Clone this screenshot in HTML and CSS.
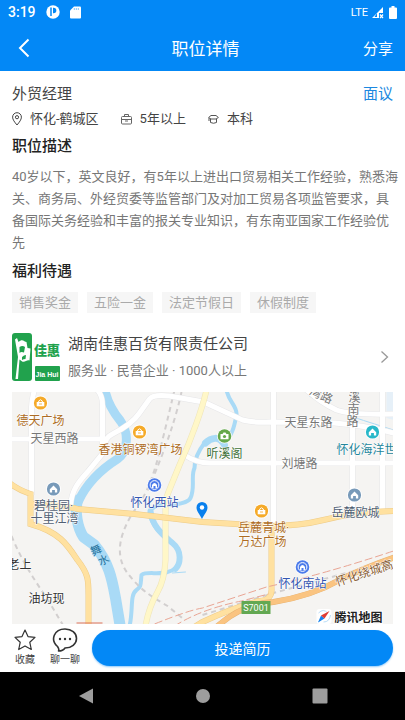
FILE: index.html
```html
<!DOCTYPE html>
<html lang="zh-CN">
<head>
<meta charset="utf-8">
<meta name="viewport" content="width=device-width, initial-scale=1">
<title>职位详情</title>
<link rel="stylesheet" href="styles.css">
</head>
<body>
<div class="status">
  <span class="time">3:19</span>
  <svg width="14" height="14" viewBox="0 0 14 14"><circle cx="7" cy="7" r="6.7" fill="#fff"/><path d="M5 2.500v8.500" fill="none" stroke="#0388f6" stroke-width="1.500"/><path d="M7 2.800h.6a2.600 2.600 0 0 1 0 5.400H7z" fill="#0388f6"/></svg>
  <svg width="11" height="13" viewBox="0 0 11 13"><path d="M4 .5h6q1 0 1 1v10q0 1-1 1H1q-1 0-1-1v-7z" fill="#fff"/><path d="M4.3 2v2M6.3 2v2M8.3 2v2" stroke="#0388f6" stroke-width=".5"/></svg>
  <span class="lte">LTE</span>
  <svg width="13" height="13" viewBox="0 0 13 13"><path d="M12 1v6H8v5H1z" fill="#fff"/><path d="M6 7v4H3.5z" fill="#0388f6"/><path d="M9 8.5l3 3.5M12 8.5L9 12" stroke="#fff" stroke-width="1.2"/></svg>
  <svg class="battery" width="8" height="13" viewBox="0 0 8 13"><path d="M2.5 0h3v1.5H7q1 0 1 1V12q0 1-1 1H1q-1 0-1-1V2.500q0-1 1-1h1.500z" fill="#fff"/></svg>
</div>
<header class="header">
  <button class="back" aria-label="返回"><svg width="12" height="20" viewBox="0 0 12 20"><path d="M10.500 1.500L2 10l8.500 8.500" fill="none" stroke="#fff" stroke-width="2"/></svg></button>
  <h1>职位详情</h1>
  <button class="share">分享</button>
</header>
<main class="content">
  <div class="job"><span>外贸经理</span><span class="salary">面议</span></div>
  <div class="facts">
    <span class="fact"><svg width="10" height="14" viewBox="0 0 10 14" fill="none" stroke="#444"><path d="M5 13C2.500 10 .6 7.600.6 5.100a4.400 4.400 0 0 1 8.800 0C9.400 7.600 7.500 10 5 13z"/><circle cx="5" cy="5.200" r="1.600"/></svg>怀化-鹤城区</span>
    <span class="fact"><svg width="11" height="11" viewBox="0 0 11 11" fill="none" stroke="#666"><rect x=".5" y="2.500" width="10" height="7.500" rx="1"/><path d="M3.500 2.500v-2h4v2M.5 5.500h10M4 7h3"/></svg>5年以上</span>
    <span class="fact"><svg width="11" height="11" viewBox="0 0 11 11" fill="none" stroke="#555"><path d="M.6 3.500L3 1.500h5l2.400 2L8 5H3zM2.500 5v3.500q3 1.500 6 0V5M1 4v3"/></svg>本科</span>
  </div>
  <h2>职位描述</h2>
  <p class="desc">40岁以下，英文良好，有5年以上进出口贸易相关工作经验，熟悉海关、商务局、外经贸委等监管部门及对加工贸易各项监管要求，具备国际关务经验和丰富的报关专业知识，有东南亚国家工作经验优先</p>
  <h2>福利待遇</h2>
  <ul class="tags"><li>销售奖金</li><li>五险一金</li><li>法定节假日</li><li>休假制度</li></ul>
  <a class="company" href="#company">
    <svg class="logo" width="48" height="48" viewBox="0 0 48 48">
      <rect width="20" height="48" rx="3" fill="#21a24d"/>
      <path d="M3 6.500L5 5l1.500 4c4-4 6 0 8 0l1 6 3 .5-1 12c-3-1-5 3-8 .5l-2-1.500L6 46H3.500L6 24z" fill="#fff"/>
      <path d="M7.500 14q3-2 5.500 0l-1 5.500q-3-1-4.500.5zM10 24q2-2 4-2l-.500 4q-2 0-3.500 1z" fill="#21a24d"/>
      <text x="35" y="22" class="logo-name">佳惠</text>
      <rect x="23" y="33" width="25" height="15" rx="1" fill="#21a24d"/>
      <text x="35" y="44" class="logo-text">Jia Hui</text>
    </svg>
    <span class="info"><span class="name">湖南佳惠百货有限责任公司</span><span class="meta">服务业 · 民营企业 · 1000人以上</span></span>
    <svg width="9" height="14" viewBox="0 0 9 14"><path d="M1.500 1.500L7.500 7l-6 5.500" fill="none" stroke="#999" stroke-width="1.300"/></svg>
  </a>
  <svg class="map" viewBox="12 392 382 232" preserveAspectRatio="xMidYMid slice" role="img" aria-label="地图">
    <defs>
      <g id="home"><circle r="7.500" fill="#fff"/><circle r="6.600"/><path d="M-3.700.3L0-3.500 3.700.3V3.400H1.400V1h-2.800v2.400h-2.300z" fill="#fff"/></g>
      <g id="bag"><circle r="7.500" fill="#fff"/><circle r="6.600"/><path d="M-3.800-1h7.600v4.300h-7.600z" fill="#fff"/><path d="M-1.800-1v-1q1.800-2.500 3.600 0v1" fill="none" stroke="#fff"/><path d="M-1.500 1h3" stroke="#f5a623" stroke-width=".8"/></g>
      <g id="train"><circle r="7.500" fill="#fff"/><circle r="6.800"/><circle r="4.400" fill="none" stroke="#fff"/><path d="M-2.500 3v-3q2.500-4 5 0v3h-1.500V1h-2v2z" fill="#fff"/></g>
    </defs>
    <rect x="12" y="392" width="382" height="232" fill="#f5f4f2"/>
    <path d="M387 392v26l7 2v-28z" fill="#e6f0f8"/>
    <g class="water">
      <path d="M105 388C108 405 116 415 121 421 131 435 127 453 118 459 99 471 87 484 79 501" stroke-width="9"/>
      <path d="M78 500C75 512 78 528 84 537L95 545C110 563 113 582 116 598L121 628" stroke-width="11"/>
      <path d="M227 390C229 402 238 406 237 415 235 425 233 436 224 444" stroke-width="4"/>
      <path d="M225 445C220 435 211 438 206 443" stroke-width="7"/>
      <path d="M205 443C198 452 195 461 195 468 191 476 196 488 191 498 188 504 174 505 162 505 155 506 151 509 150 513 153 530 165 535 173 543 186 553 180 570 168 572 159 575 147 571 142 575 141 584 142 587 137 590 130 595 134 610 130 626" stroke-width="4"/>
      <path d="M151 511C153 528 165 536 173 543 183 551 181 564 176 569" stroke-width="6"/>
      <path d="M310 396C339 414 357 418 394 430M173 573l13-1" stroke-width="1"/>
    </g>
    <g class="rail">
      <path d="M175 390Q168 420 160 452T142 500L132 515C116 542 117 562 132 578 143 592 158 600 168 606L184 619"/>
      <path d="M182 392Q176 420 163 454L148 492"/>
      <path d="M12 536C22 560 34 579 48 599L64 626"/>
      <path d="M203 615L274 593 394 560"/>
    </g>
    <g class="edge"><path id="white" d="M35 390Q32 400 32 407V495M12 439H103M98 390Q103 396 103 405V447M71 506C72 490 79 482 88 472L106 450Q103 439 113 434C125 428 134 422 140 413L150 399Q154 394 170 396L204 402Q230 414 243 420 255 423 270 422L335 423Q370 426 394 433M305 388Q320 402 337 410 351 415 394 414M274 390V525M185 455Q197 463 210 463H394M353 425V512M383 390V512"/></g>
    <use href="#white" class="white"/>
    <path d="M207 390C203 408 192 439 180 465L169 492Q166 499 166 512V560Q165 580 158 592 149 608 146 626" class="pale-edge"/>
    <path d="M207 390C203 408 192 439 180 465L169 492Q166 499 166 512V560Q165 580 158 592 149 608 146 626" class="pale"/>
    <g class="road-edge"><path id="yellow" d="M10 483Q19 490 31 494V524C60 532 68 545 78 560 89 574 89 580 89 595V626M31 504Q68 506 78 509L135 514 203 522 270 526Q300 526 324 520 354 512 394 511M272 526V588Q273 600 260 601 235 607 203 622L190 630"/></g>
    <use href="#yellow" class="road"/>
    <path d="M214 630Q240 604 274 602 312 596 340 580 364 568 396 557" class="high-edge"/>
    <path d="M214 630Q240 604 274 602 312 596 340 580 364 568 396 557" class="high"/>
    <g class="red-rail"><path d="M155 624Q190 610 203 608L267 587Q325 574 394 551M175 626Q202 609 242 601L269 594"/></g>
    <path d="M77 623h26" stroke="#dc725b" fill="none"/>
    <use href="#bag" x="41" y="403" fill="#f5aa29"/>
    <use href="#bag" x="140" y="432" fill="#f5aa29"/>
    <use href="#bag" x="262" y="511" fill="#f5aa29"/>
    <use href="#home" x="54" y="489" fill="#789ab9"/>
    <use href="#home" x="355" y="495" fill="#789ab9"/>
    <use href="#home" x="373" y="432" fill="#28b8c9"/>
    <use href="#train" x="155" y="485" fill="#4c7bea"/>
    <use href="#train" x="303" y="567" fill="#4c7bea"/>
    <g transform="translate(225 436)"><circle r="7.500" fill="#fff"/><circle r="6.800" fill="#65a84b"/><path d="M-4-2h2l1-1.500h2L2-2h2v5.200h-8z" fill="#fff"/><circle cy=".5" r="1.600" fill="#65a84b"/></g>
    <path d="M202.500 519C200 514 197 511 197 507.500a5.500 5.500 0 0 1 11 0C208 511 205 514 202.500 519z" fill="#087fed"/><circle cx="202.500" cy="507.500" r="2.200" fill="#fff"/>
    <g class="labels">
      <g class="brown"><text x="41" y="425">德天广场</text><text x="141" y="454">香港铜锣湾广场</text><text x="264" y="532">岳麓青城·</text><text x="263" y="546">万达广场</text></g>
      <g class="grey"><text x="55" y="443">天星西路</text><text x="309" y="427">天星东路</text><text x="300" y="468">刘塘路</text><text transform="translate(320 399) rotate(24)">湾路</text><text x="355" y="402">溪</text><text x="354" y="414">南</text><text x="353" y="426">路</text></g>
      <text x="225" y="458" fill="#3d7136">听溪阁</text>
      <text x="337" y="454" text-anchor="start" class="sea">怀化海洋世</text>
      <g class="slate"><text x="54" y="510">碧桂园·</text><text x="55" y="523">十里江湾</text><text x="356" y="517">岳麓欧城</text></g>
      <g class="blue"><text x="155" y="507">怀化西站</text><text x="303" y="588">怀化南站</text></g>
      <g class="river"><text transform="translate(97 551) rotate(-25)" y="3">舞</text><text transform="translate(104 560) rotate(-25)" y="4">水</text></g>
      <text x="20" y="569" class="dark">老上</text><text x="47" y="603" class="dark">油坊现</text>
      <text transform="translate(366 577) rotate(-18)" class="highway">怀化绕城高</text>
    </g>
    <rect x="242" y="601" width="29" height="13" fill="#63a852"/><text x="256.500" y="610.500" class="route">S7001</text>
    <rect x="317" y="609" width="15" height="15" rx="3" fill="#fff"/><path d="M319 613q5-5 9 0l-9 9M324 622q6 0 7-7" stroke="#b9ddf7" fill="none"/><path d="M318.500 622.500l3-7 3.500 3z" fill="#1682ec"/><path d="M330 611l-8.500 4.500 3.500 3z" fill="#df3c32"/>
    <text x="335" y="622" class="brand">腾讯地图</text>
  </svg>
</main>
<footer class="actions">
  <button class="action"><svg width="24" height="24" viewBox="0 0 24 24"><path d="M12 2l3 6.600 7 .8-5.200 4.900 1.500 7.200-6.300-3.600-6.300 3.600 1.500-7.200L2 9.400l7-.8z" fill="none" stroke="#333" stroke-width="1.200" stroke-linejoin="round"/></svg>收藏</button>
  <button class="action chat"><svg width="26" height="24" viewBox="0 0 26 24"><path d="M5.500 18.500C-2 12 2 1 13 1c6.500 0 11.500 4 11.500 9.500S19.500 20 13 20q-2 3-6.500 3 1-1.500-1-4.500z" fill="none" stroke="#333" stroke-width="1.600" stroke-linejoin="round"/><g fill="#333"><circle cx="8" cy="11" r="1.200"/><circle cx="13" cy="11" r="1.200"/><circle cx="18" cy="11" r="1.200"/></g></svg>聊一聊</button>
  <button class="apply">投递简历</button>
</footer>
<nav class="nav">
  <button aria-label="后退"><svg width="16" height="16" viewBox="0 0 16 16"><path d="M15 .5v15L1 8z"/></svg></button>
  <button aria-label="主页"><svg width="16" height="16" viewBox="0 0 16 16"><circle cx="8" cy="8" r="7"/></svg></button>
  <button aria-label="最近任务"><svg width="16" height="16" viewBox="0 0 16 16"><rect x=".5" y=".5" width="15" height="15" rx="1"/></svg></button>
</nav>
</body>
</html>
```
FILE: styles.css
```css
* { box-sizing: border-box; }
body {
  margin: 0;
  min-height: 100vh;
  display: flex;
  flex-direction: column;
  background: #fff;
  color: #444;
  font-family: Roboto, "Noto Sans CJK SC", sans-serif;
  font-size: 13px;
}
button { border: 0; padding: 0; background: none; font: inherit; color: inherit; }
svg { display: block; flex: none; }
h1, h2, p, ul { margin: 0; padding: 0; }

.status {
  height: 24px;
  display: flex;
  align-items: center;
  padding: 0 8px;
  background: #0388f6;
  color: #fff;
}
.time { font-size: 14px; font-weight: 500; margin-right: 10px; }
.time + svg { margin-right: 10px; }
.lte { margin-left: auto; margin-right: 3px; font-size: 11px; }
.battery { margin-left: 5px; }

.header {
  height: 47px;
  display: grid;
  grid-template-columns: 1fr auto 1fr;
  align-items: center;
  padding: 0 12px 0 18px;
  background: #0388f6;
  color: #fff;
}
.header h1 { font-size: 17px; font-weight: 400; }
.back { justify-self: start; }
.share { justify-self: end; font-size: 15px; }

.content {
  flex: 1;
  display: flex;
  flex-direction: column;
  padding: 12px 12px 0;
}
.job { display: flex; justify-content: space-between; font-size: 15px; line-height: 22px; }
.salary { color: #1c88e0; }
.facts { display: flex; gap: 22px; margin-top: 4px; line-height: 20px; }
.fact { display: flex; align-items: center; gap: 8px; }
h2 { margin-top: 5px; font-size: 15px; font-weight: 500; line-height: 24px; color: #222; }
.desc { margin: 8px -7px 0 0; line-height: 22px; color: #777; }
.tags { display: flex; flex-wrap: wrap; gap: 9px; margin-top: 9px; list-style: none; }
.tags li { padding: 0 7px; line-height: 21px; background: #f6f6f6; color: #aaa; }
.company {
  display: flex;
  align-items: center;
  gap: 8px;
  margin-top: 20px;
  padding-right: 4px;
  color: #444;
  text-decoration: none;
}
.logo-name { fill: #21a24d; font-size: 13px; font-weight: 900; text-anchor: middle; }
.logo-text { fill: #fff; font: bold 7px "Liberation Sans", sans-serif; text-anchor: middle; }
.info { flex: 1; display: flex; flex-direction: column; gap: 6px; }
.name { font-size: 15px; line-height: 22px; }
.meta { line-height: 20px; color: #777; }

.map { width: 100%; flex: 1 0 232px; margin-top: 11px; }
.water path { fill: none; stroke: #a9daf6; stroke-linecap: round; stroke-linejoin: round; }
.rail path { fill: none; stroke: #d2cfcf; stroke-width: 2; stroke-dasharray: 5 4; }
.edge { fill: none; stroke: #e6e6e8; stroke-width: 6; }
.white { fill: none; stroke: #fff; stroke-width: 5; }
.pale-edge { fill: none; stroke: #eee4b9; stroke-width: 6; }
.pale { fill: none; stroke: #fff7c8; stroke-width: 5; }
.road-edge { fill: none; stroke: #eecb87; stroke-width: 6; }
.road { fill: none; stroke: #ffe1a0; stroke-width: 5; }
.high-edge { fill: none; stroke: #e5b273; stroke-width: 6; }
.high { fill: none; stroke: #fac481; stroke-width: 5; }
.red-rail { fill: none; stroke: #e9a594; stroke-width: 1; stroke-dasharray: 8 3; }
.labels {
  font-size: 12px;
  text-anchor: middle;
  paint-order: stroke;
  stroke: #fff;
  stroke-width: 1px;
  stroke-linejoin: round;
}
.brown { fill: #ad6c24; }
.grey { fill: #777; }
.sea { fill: #24869b; text-anchor: start; }
.slate { fill: #515f73; }
.blue { fill: #3456b1; }
.river { fill: #24719b; stroke: #a9daf6; font-size: 11px; }
.dark { fill: #333; }
.highway { fill: #875b31; }
.route { fill: #fff; font-size: 9px; text-anchor: middle; }
.brand { fill: #222; font-size: 12px; font-weight: 700; stroke: #fff; stroke-width: 2px; paint-order: stroke; }

.actions { display: flex; align-items: center; height: 48px; padding: 0 12px; }
.action { display: flex; flex-direction: column; align-items: center; width: 26px; font-size: 10px; line-height: 16px; white-space: nowrap; }
.chat { width: 30px; margin-left: 12px; }
.apply { flex: 1; height: 36px; margin-left: 12px; border-radius: 18px; background: #0388f6; color: #fff; font-size: 14px; box-shadow: 0 1px 2px #8cc8fa; }

.nav { display: flex; justify-content: center; gap: 101px; height: 48px; background: #000; }
.nav svg { fill: #9d9d9d; }
```
